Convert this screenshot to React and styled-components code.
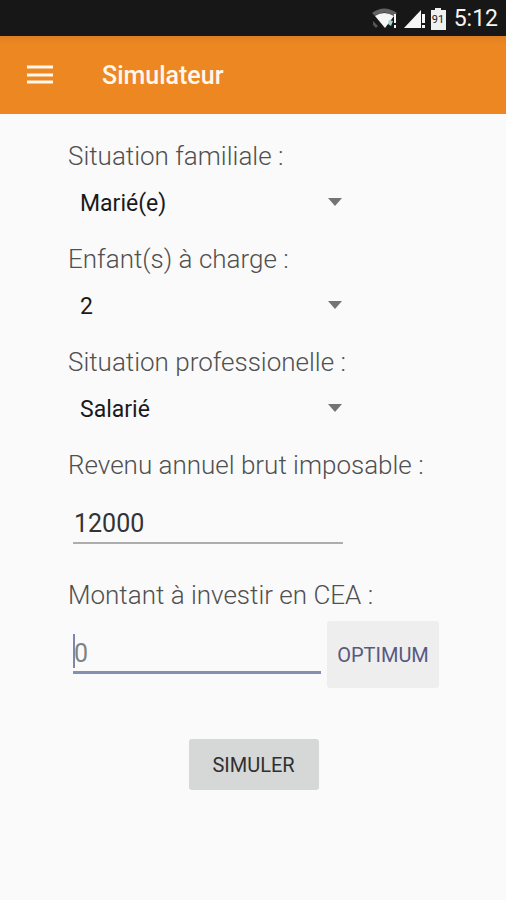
import React from "react";
import styled, { createGlobalStyle } from "styled-components";

const GlobalStyle = createGlobalStyle`
  *, *::before, *::after { box-sizing: border-box; }
  body {
    margin: 0;
    background: #fafafa;
    font-family: Roboto, "Noto Sans", sans-serif;
  }
  button, input, select { font-family: inherit; }
`;

const Screen = styled.div`
  min-height: 100vh;
  background: #fafafa;
`;

const StatusBar = styled.div`
  display: flex;
  align-items: center;
  justify-content: flex-end;
  height: 36px;
  padding-right: 8px;
  background: #171717;
  color: #f4f4f4;
`;

const StatusIcons = styled.svg`
  display: block;
  width: 76px;
  height: 28px;
  margin-right: 7px;
`;

const Clock = styled.time`
  padding-top: 1px;
  font-size: 23px;
  line-height: 35px;
`;

const AppBar = styled.header`
  display: flex;
  align-items: center;
  gap: 48px;
  height: 78px;
  padding: 0 26px;
  background: linear-gradient(#df7e22, #ec8722 8px);
  color: #fff7ee;
`;

const MenuButton = styled.button`
  display: block;
  padding: 0;
  border: 0;
  background: none;
  color: inherit;

  svg { display: block; width: 28px; height: 24px; }
`;

const Title = styled.h1`
  margin: 0;
  padding-top: 2px;
  font-size: 25px;
  font-weight: 500;
  line-height: 40px;
`;

const Form = styled.form`
  display: flex;
  flex-direction: column;
  padding: 22px 67px 0 68px;
`;

const Field = styled.div`
  display: flex;
  flex-direction: column;
  margin-bottom: ${({ $gap }) => $gap}px;
`;

const Label = styled.label`
  color: #505050;
  font-size: 26px;
  font-weight: 300;
  line-height: 40px;
  white-space: nowrap;
`;

const SelectBox = styled.div`
  display: flex;
  align-items: center;
  width: 75%;
  height: 52px;
`;

const Select = styled.select`
  flex: 1;
  min-width: 0;
  height: 52px;
  padding: 2px 0 0 12px;
  border: 0;
  outline: 0;
  appearance: none;
  background: none;
  color: #1a1a1a;
  font-size: 23px;
`;

const Arrow = styled.svg`
  flex: none;
  width: 14px;
  height: 8px;
  margin-right: 4px;
  fill: #747474;
  pointer-events: none;
`;

const InputRow = styled.div`
  display: flex;
  align-items: flex-start;
  gap: 6px;
  width: ${({ $wide }) => ($wide ? "100%" : "74%")};
  padding-left: 5px;
`;

const InputBox = styled.div`
  position: relative;
  flex: 1;
  min-width: 0;
`;

const Input = styled.input`
  display: block;
  width: 100%;
  height: 59px;
  padding: 20px 1px 0;
  border: 0;
  border-bottom: ${({ $active }) => ($active ? "3px solid #8490b0" : "2px solid #adadad")};
  outline: 0;
  background: none;
  color: #333;
  font-size: 25px;

  &::placeholder { color: #828282; opacity: 1; }
`;

const Caret = styled.span`
  position: absolute;
  left: 0;
  bottom: 6px;
  width: 2px;
  height: 34px;
  background: #7c87ab;
`;

const OptimumButton = styled.button`
  width: 112px;
  height: 67px;
  margin-top: 6px;
  padding: 0;
  border: 0;
  border-radius: 3px;
  background: #eeeeee;
  color: #565980;
  font-size: 20px;
`;

const SubmitButton = styled.button`
  align-self: center;
  width: 130px;
  height: 51px;
  padding: 0;
  border: 0;
  border-radius: 3px;
  background: #d6d7d7;
  color: #303030;
  font-size: 20px;
`;

function Picker({ id, label, options, gap }) {
  return (
    <Field $gap={gap}>
      <Label htmlFor={id}>{label}</Label>
      <SelectBox>
        <Select id={id} defaultValue={options[0]}>
          {options.map((o) => (
            <option key={o}>{o}</option>
          ))}
        </Select>
        <Arrow viewBox="0 0 14 8" aria-hidden="true">
          <path d="M0 0H14L7 8Z" />
        </Arrow>
      </SelectBox>
    </Field>
  );
}

export default function App() {
  return (
    <Screen>
      <GlobalStyle />
      <StatusBar>
        <StatusIcons viewBox="0 0 76 28" aria-hidden="true">
          <path d="M1 9Q13 0 26 9L23 12Q13 5 4 12Z" fill="#626262" />
          <path d="M4 12Q13 6 23 12L14 24Z" fill="#f5f5f5" />
          <path d="M2 17L7 22L5 24L2 21Z" fill="#555" />
          <path d="M18 16L22 17L20 22L17 20Z" fill="#9bd5d8" />
          <path d="M23 10H25V19H23ZM23 21H25V24H23Z" fill="#f5f5f5" />
          <path d="M33 24L50 6V24Z" fill="#f5f5f5" />
          <path d="M51 10H54V19H51ZM51 21H54V24H51Z" fill="#f5f5f5" />
          <path d="M60 6H64V4H70V6H75V26H60Z" fill="#f0f0f0" />
          <text x="67" y="19" textAnchor="middle" fontSize="11" fill="#222">91</text>
        </StatusIcons>
        <Clock>5:12</Clock>
      </StatusBar>
      <AppBar>
        <MenuButton type="button" aria-label="Menu">
          <svg viewBox="0 0 28 24" aria-hidden="true">
            <path d="M1 4H27M1 12H27M1 19H27" stroke="currentColor" strokeWidth="3" />
          </svg>
        </MenuButton>
        <Title>Simulateur</Title>
      </AppBar>
      <Form onSubmit={(e) => e.preventDefault()}>
        <Picker id="famille" label="Situation familiale :" options={["Marié(e)", "Célibataire"]} gap={11} />
        <Picker id="enfants" label="Enfant(s) à charge :" options={["2", "0", "1", "3"]} gap={11} />
        <Picker id="profession" label="Situation professionelle :" options={["Salarié", "Indépendant"]} gap={11} />
        <Field $gap={31}>
          <Label htmlFor="revenu">Revenu annuel brut imposable :</Label>
          <InputRow>
            <InputBox>
              <Input id="revenu" inputMode="numeric" defaultValue="12000" />
            </InputBox>
          </InputRow>
        </Field>
        <Field $gap={51}>
          <Label htmlFor="montant">Montant à investir en CEA :</Label>
          <InputRow $wide>
            <InputBox>
              <Input id="montant" inputMode="numeric" placeholder="0" $active />
              <Caret />
            </InputBox>
            <OptimumButton type="button">OPTIMUM</OptimumButton>
          </InputRow>
        </Field>
        <SubmitButton type="submit">SIMULER</SubmitButton>
      </Form>
    </Screen>
  );
}
